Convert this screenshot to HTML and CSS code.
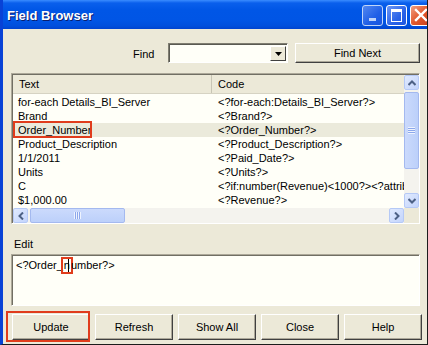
FILE: index.html
```html
<!DOCTYPE html>
<html lang="en">
<head>
  <meta charset="UTF-8">
  <title>Field Browser</title>
  <link rel="stylesheet" href="styles.css">
</head>
<body>
  <div class="window">
    <div class="titlebar">
      <span class="title">Field Browser</span>
      <div class="caption-buttons">
        <span class="cap cap-min"><span class="min-bar"></span></span>
        <span class="cap cap-max"><span class="max-box"></span></span>
        <span class="cap cap-close">
          <svg width="14" height="14" viewBox="0 0 14 14"><path d="M2 2 L12 12 M12 2 L2 12" stroke="#fff" stroke-width="2.4" stroke-linecap="square"/></svg>
        </span>
      </div>
    </div>

    <div class="client">
      <div class="find-row">
        <span class="find-label">Find</span>
        <div class="combo">
          <span class="combo-input"></span>
          <span class="combo-btn">
            <svg width="7" height="4" viewBox="0 0 7 4"><path d="M0 0 H7 L3.5 4 Z" fill="#000"/></svg>
          </span>
        </div>
        <button class="btn find-next">Find Next</button>
      </div>

      <div class="listview">
        <div class="list-main">
          <div class="list-header">
            <span class="col-text">Text</span>
            <span class="col-code">Code</span>
          </div>
          <div class="list-rows">
            <div class="row"><span class="col-text">for-each Details_BI_Server</span><span class="col-code">&lt;?for-each:Details_BI_Server?&gt;</span></div>
            <div class="row"><span class="col-text">Brand</span><span class="col-code">&lt;?Brand?&gt;</span></div>
            <div class="row selected"><span class="col-text">Order_Number</span><span class="col-code">&lt;?Order_Number?&gt;</span></div>
            <div class="row"><span class="col-text">Product_Description</span><span class="col-code">&lt;?Product_Description?&gt;</span></div>
            <div class="row"><span class="col-text">1/1/2011</span><span class="col-code">&lt;?Paid_Date?&gt;</span></div>
            <div class="row"><span class="col-text">Units</span><span class="col-code">&lt;?Units?&gt;</span></div>
            <div class="row"><span class="col-text">C</span><span class="col-code">&lt;?if:number(Revenue)&lt;1000?&gt;&lt;?attrib</span></div>
            <div class="row"><span class="col-text">$1,000.00</span><span class="col-code">&lt;?Revenue?&gt;</span></div>
          </div>
          <div class="hscroll">
            <span class="sb-btn">
              <svg width="8" height="8" viewBox="0 0 8 8"><path d="M6 0.5 L2.5 4 L6 7.5" fill="none" stroke="#4d6185" stroke-width="2"/></svg>
            </span>
            <div class="h-track">
              <span class="h-thumb"><span class="grip-v"></span></span>
            </div>
            <span class="sb-btn">
              <svg width="8" height="8" viewBox="0 0 8 8"><path d="M2 0.5 L5.5 4 L2 7.5" fill="none" stroke="#4d6185" stroke-width="2"/></svg>
            </span>
          </div>
        </div>
        <div class="vscroll">
          <span class="sb-btn">
            <svg width="8" height="8" viewBox="0 0 8 8"><path d="M0.5 6 L4 2.5 L7.5 6" fill="none" stroke="#4d6185" stroke-width="2"/></svg>
          </span>
          <div class="v-track">
            <span class="v-thumb"><span class="grip-h"></span></span>
          </div>
          <span class="sb-btn">
            <svg width="8" height="8" viewBox="0 0 8 8"><path d="M0.5 2 L4 5.5 L7.5 2" fill="none" stroke="#4d6185" stroke-width="2"/></svg>
          </span>
          <span class="sb-corner"></span>
        </div>
      </div>

      <div class="edit-label">Edit</div>
      <div class="edit-box">&lt;?Order_<span class="caret-mark">n<span class="caret"></span></span>umber?&gt;</div>

      <div class="button-row">
        <button class="btn">Update</button>
        <button class="btn">Refresh</button>
        <button class="btn">Show All</button>
        <button class="btn">Close</button>
        <button class="btn">Help</button>
      </div>

      <span class="mark mark-order"></span>
      <span class="mark mark-update"></span>
    </div>
  </div>
</body>
</html>
```

FILE: styles.css
```css
/* Page */
body {
  margin: 0;
  background: #ece9d8;
  font-family: 'Liberation Sans', Arial, sans-serif;
  font-size: 11px;
  color: #000;
}

/* Window frame */
.window {
  width: 428px;
  height: 345px;
  display: flex;
  flex-direction: column;
  box-sizing: border-box;
  border-left: 3px solid #0842d6;
  border-right: 1px solid #1c1c1c;
  border-bottom: 1px solid #1c1c1c;
  overflow: hidden;
}

/* Title bar */
.titlebar {
  height: 29px;
  flex: none;
  margin-left: -3px;
  display: flex;
  align-items: center;
  justify-content: space-between;
  padding-left: 7px;
  background: linear-gradient(#3a8cff 0px, #0a5fec 3px, #0056e6 10px, #0055e5 20px, #004fdc 26px, #0043cf 29px);
}

.title {
  color: #fff;
  font-weight: bold;
  font-size: 13px;
  text-shadow: 1px 1px 0 #0a1e6e;
  padding-top: 1px;
}

.caption-buttons {
  display: flex;
  gap: 3px;
  margin-right: -4px;
  margin-top: 1px;
}

.cap {
  width: 19px;
  height: 19px;
  border: 1px solid #fff;
  border-radius: 3px;
  display: flex;
  align-items: center;
  justify-content: center;
  background: linear-gradient(135deg, #6e98f4, #2a63e8 60%, #1f56e0);
}

.cap-min {
  align-items: flex-end;
  opacity: 0.75;
}

.min-bar {
  width: 7px;
  height: 3px;
  background: #fff;
  margin-bottom: 4px;
  margin-right: 1px;
}

.max-box {
  width: 9px;
  height: 9px;
  border: 1px solid #fff;
  border-top-width: 3px;
}

.cap-close {
  background: linear-gradient(135deg, #f0a083, #e2582d 50%, #c8401d);
}

/* Client area */
.client {
  flex: 1;
  position: relative;
  background: #ece9d8;
  padding: 14px 5px 0 8px;
  display: flex;
  flex-direction: column;
}

.find-row {
  display: flex;
  align-items: center;
  height: 20px;
  padding-left: 122px;
}

.find-label {
  width: 35px;
  padding-top: 1px;
}

.combo {
  width: 120px;
  height: 20px;
  box-sizing: border-box;
  display: flex;
  border: 1px solid;
  border-color: #7f7d71 #fff #fff #7f7d71;
  background: #fffff8;
  box-shadow: inset 1px 1px 0 #5a5a52;
}

.combo-input {
  flex: 1;
}

.combo-btn {
  width: 16px;
  margin: 2px 1px 1px 0;
  box-sizing: border-box;
  display: flex;
  align-items: center;
  justify-content: center;
  background: #ece9d8;
  border: 1px solid;
  border-color: #fff #404040 #404040 #fff;
}

/* Buttons */
.btn {
  font-family: 'Liberation Sans', Arial, sans-serif;
  font-size: 11px;
  color: #000;
  background: #ece9d8;
  border: 1px solid;
  border-color: #fff #404040 #404040 #fff;
  box-shadow: inset -1px -1px 0 #aca899;
  padding: 0;
}

.find-next {
  width: 125px;
  height: 20px;
  margin-left: 7px;
}

/* List view */
.listview {
  margin-top: 10px;
  width: 409px;
  height: 151px;
  box-sizing: border-box;
  display: flex;
  border: 1px solid;
  border-color: #aca899 #fff #fff #aca899;
  box-shadow: inset 1px 1px 0 #716f64;
  padding: 1px 0 0 1px;
  background: #fffff8;
}

.list-main {
  flex: 1;
  display: flex;
  flex-direction: column;
  overflow: hidden;
}

.list-header {
  display: flex;
  height: 18px;
  flex: none;
  background: #ece9d8;
  border-bottom: 1px solid #d6d3c3;
}

.list-header span {
  padding: 3px 0 0 6px;
}

.list-header .col-text {
  border-right: 1px solid #c8c5b5;
}

.col-text {
  width: 199px;
  flex: none;
  box-sizing: border-box;
  padding-left: 5px;
  white-space: nowrap;
}

.col-code {
  flex: 1;
  padding-left: 6px;
  white-space: nowrap;
  overflow: hidden;
}

.list-rows {
  flex: 1;
  padding-top: 1px;
}

.row {
  display: flex;
  height: 14px;
  line-height: 14px;
}

.row.selected {
  background: #ebeadb;
}

/* Scrollbars */
.hscroll {
  height: 15px;
  flex: none;
  display: flex;
  background: #f4f3ee;
}

.sb-btn {
  width: 15px;
  height: 15px;
  box-sizing: border-box;
  flex: none;
  display: flex;
  align-items: center;
  justify-content: center;
  border: 1px solid #b5c9f6;
  border-radius: 2px;
  background: linear-gradient(135deg, #e0eafe, #c3d4fc);
}

.h-track {
  flex: 1;
  padding-left: 2px;
  display: flex;
}

.h-thumb {
  width: 95px;
  height: 15px;
  box-sizing: border-box;
  border: 1px solid #a4b9ef;
  border-radius: 2px;
  background: linear-gradient(#cbdafc, #bcd0fa);
  display: flex;
  align-items: center;
  justify-content: center;
}

.grip-v {
  width: 7px;
  height: 7px;
  background: repeating-linear-gradient(90deg, #eef3fe 0 1px, #8ca8ec 1px 2px);
}

.vscroll {
  width: 15px;
  flex: none;
  display: flex;
  flex-direction: column;
  background: #f4f3ee;
}

.v-track {
  flex: 1;
  padding-top: 2px;
  padding-bottom: 24px;
  display: flex;
}

.v-thumb {
  flex: 1;
  box-sizing: border-box;
  border: 1px solid #a4b9ef;
  border-radius: 2px;
  background: linear-gradient(90deg, #cbdafc, #bcd0fa);
  display: flex;
  align-items: center;
  justify-content: center;
}

.grip-h {
  width: 7px;
  height: 7px;
  background: repeating-linear-gradient(#eef3fe 0 1px, #8ca8ec 1px 2px);
}

.sb-corner {
  height: 15px;
  background: #ece9d8;
}

/* Edit */
.edit-label {
  margin-top: 14px;
  padding-left: 3px;
  height: 14px;
}

.edit-box {
  margin-top: 2px;
  width: 409px;
  height: 52px;
  box-sizing: border-box;
  border: 1px solid;
  border-color: #aca899 #fff #fff #aca899;
  box-shadow: inset 1px 1px 0 #716f64;
  background: #fffff8;
  padding: 3px 0 0 4px;
  line-height: 14px;
}

.caret-mark {
  display: inline-block;
  height: 13px;
  line-height: 13px;
  padding: 0 1px 0 1px;
  outline: 2px solid #e03c1c;
  vertical-align: top;
  margin-top: 1px;
}

.caret {
  display: inline-block;
  width: 1px;
  height: 13px;
  background: #000;
  vertical-align: top;
  margin-left: -2px;
  margin-right: 1px;
}

/* Bottom buttons */
.button-row {
  display: flex;
  gap: 5px;
  margin-top: 8px;
  padding-left: 1px;
}

.button-row .btn {
  width: 78px;
  height: 26px;
}

/* Annotation boxes */
.mark {
  position: absolute;
  border: 2px solid #e03c1c;
}

.mark-order {
  left: 10px;
  top: 92px;
  width: 75px;
  height: 13px;
}

.mark-update {
  left: 3px;
  top: 282px;
  width: 80px;
  height: 27px;
}
```
